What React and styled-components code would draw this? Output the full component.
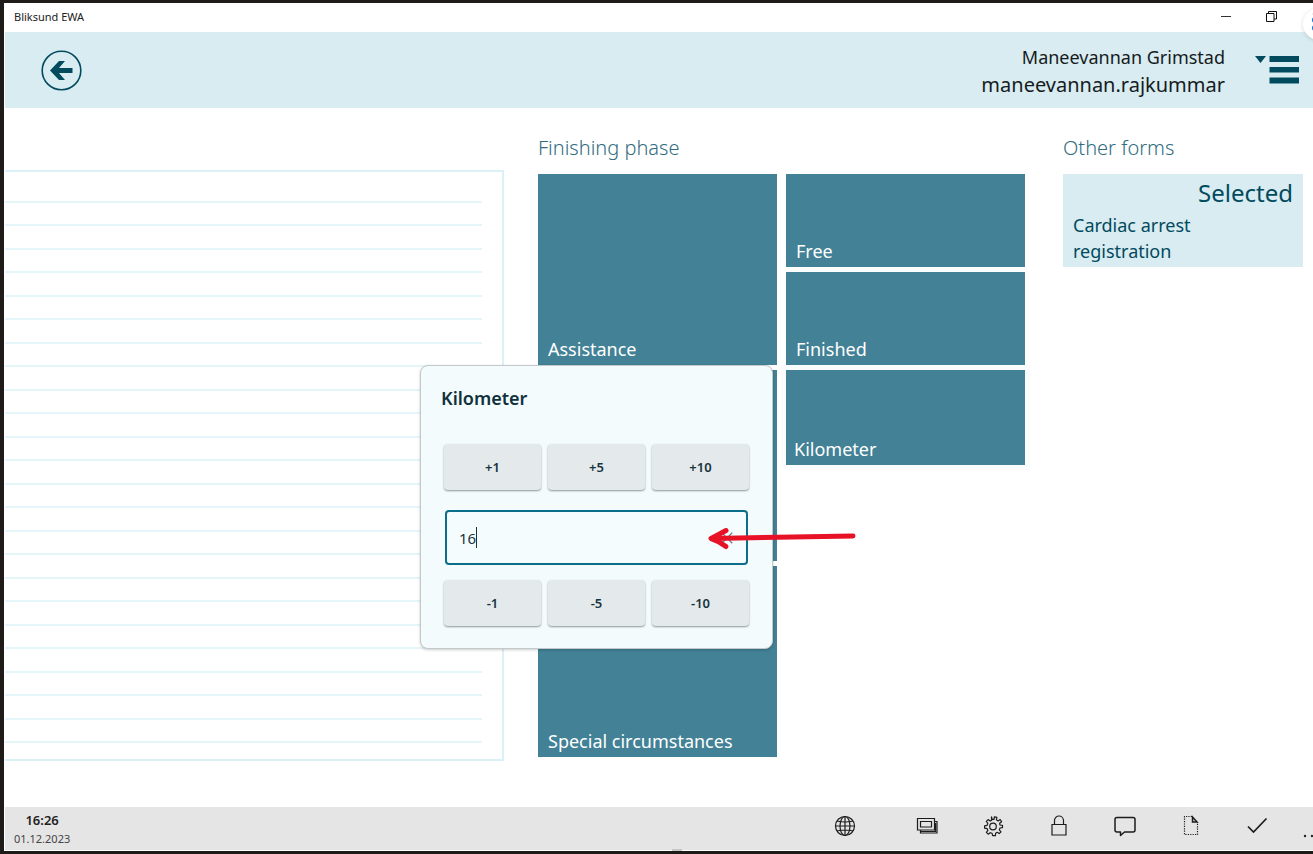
import React, { useState } from 'react'
import styled, { createGlobalStyle } from 'styled-components'

const palette = {
    frame: '#1f1b18',
    pale: '#d8ecf1',
    line: '#daf1f7',
    tile: '#428196',
    dark: '#024a5e',
    heading: '#2f6c80',
    focus: '#0b6f8c'
}

const GlobalStyle = createGlobalStyle`
    * {
        box-sizing: border-box;
    }
    body {
        margin: 0;
        background: ${palette.frame};
        font-family: 'Noto Sans', 'Open Sans', sans-serif;
        overflow-x: hidden;
    }
    button, input {
        font-family: inherit;
    }
`

const Window = styled.div`
    display: flex;
    flex-direction: column;
    min-height: 100vh;
    border: solid ${palette.frame};
    border-width: 3px 0 3px 4px;
    background: #fff;
    position: relative;
    overflow: hidden;
`

const TitleBar = styled.div`
    display: flex;
    align-items: center;
    justify-content: space-between;
    height: 29px;
    padding: 0 36px 2px 10px;
    font-size: 11px;
    color: #222;
`

const WindowControls = styled.div`
    display: flex;
    gap: 34px;
`

const PlainButton = styled.button`
    display: flex;
    padding: 0;
    border: 0;
    background: none;
    color: ${props => props.$color || '#1c1c1c'};
    cursor: pointer;
`

const Header = styled.header`
    display: flex;
    align-items: center;
    height: 76px;
    margin-left: 1px;
    padding: 0 14px 0 35px;
    background: ${palette.pale};
`

const User = styled.div`
    margin-left: auto;
    margin-right: 30px;
    padding-top: 2px;
    text-align: right;
    line-height: 28px;
    color: #161b1d;
`

const FullName = styled.div`
    font-size: 18px;
`

const UserName = styled.div`
    font-size: 20px;
`

const Main = styled.main`
    display: grid;
    grid-template-columns: 499fr 491fr 240fr;
    column-gap: 34px;
    flex: 1;
    padding: 26px 10px 46px 1px;
`

const Notes = styled.section`
    display: flex;
    flex-direction: column;
    margin-top: 36px;
    padding: 7px 20px 16px 0;
    border: solid ${palette.line};
    border-width: 2px 2px 2px 0;
`

const NoteLine = styled.div`
    flex: 1;
    border-bottom: 2px solid #e4f6fa;
`

const Phase = styled.section`
    padding-right: ${props => props.$gap || 0}px;
`

const Heading = styled.h2`
    margin: 0 0 12px;
    font-size: 20px;
    line-height: 28px;
    font-weight: 300;
    color: ${palette.heading};
`

const Tiles = styled.div`
    position: relative;
    display: grid;
    grid-template-columns: 1fr 1fr;
    grid-template-rows: repeat(6, 93px);
    gap: 5px 9px;
`

const Tile = styled.button`
    display: flex;
    align-items: flex-end;
    grid-column: ${props => props.$column};
    grid-row: ${props => props.$row};
    padding: 0 10px 4px;
    border: 0;
    background: ${palette.tile};
    color: #fff;
    font-size: 18px;
    line-height: 24px;
    text-align: left;
    cursor: pointer;
`

const PressedTile = styled(Tile)`
    height: 95px;
    padding: 0 8px 4px;
    box-shadow: 0 0 0 5px #fbfcfe;
`

const FormTile = styled.button`
    display: flex;
    flex-direction: column;
    width: 100%;
    height: 93px;
    padding: 3px 10px;
    border: 0;
    background: ${palette.pale};
    color: ${palette.dark};
    text-align: left;
    font-size: 18px;
    line-height: 26px;
`

const Selected = styled.span`
    align-self: flex-end;
    font-size: 24px;
    line-height: 32px;
`

const FormName = styled.span`
    max-width: 160px;
    padding-top: 3px;
`

const Dialog = styled.div`
    position: absolute;
    top: 191px;
    left: -118px;
    width: 353px;
    padding: 18px 23px 22px;
    border: 1px solid #c3c9ca;
    border-radius: 8px;
    background: #f3fbfd;
    box-shadow: 0 1px 3px rgba(0, 0, 0, .2);
`

const DialogTitle = styled.label`
    display: block;
    margin: 0 -3px 32px;
    font-size: 18px;
    line-height: 28px;
    font-weight: 600;
    color: #10313c;
`

const StepRow = styled.div`
    display: grid;
    grid-template-columns: repeat(3, 1fr);
    gap: 7px;
`

const StepButton = styled.button`
    height: 46px;
    padding: 0;
    border: 0;
    border-radius: 4px;
    background: #e4eaec;
    box-shadow: 0 1px 2px rgba(0, 0, 0, .4);
    color: #17343e;
    font-size: 13px;
    font-weight: 600;
    cursor: pointer;
`

const Field = styled.div`
    display: flex;
    align-items: center;
    height: 55px;
    margin: 20px 1px 15px;
    padding: 0 12px;
    border: 2px solid ${palette.focus};
    border-radius: 4px;
    background: #f5fcfe;
`

const NumberInput = styled.input`
    width: 17px;
    padding: 0;
    border: 0;
    outline: 0;
    background: none;
    color: #1c343c;
    font-size: 15px;
`

const Caret = styled.span`
    width: 1px;
    height: 21px;
    margin-right: auto;
    background: #17343e;
`

const Arrow = styled.svg`
    position: absolute;
    left: 284px;
    top: 156px;
    pointer-events: none;
`

const Footer = styled.footer`
    display: flex;
    align-items: center;
    height: 43px;
    margin: 0 0 1px 1px;
    padding: 0 44px 0 9px;
    background: #e5e5e5;
    position: relative;
`

const Clock = styled.div`
    margin-right: auto;
    padding-top: 2px;
    text-align: center;
    font-size: 11px;
    line-height: 18px;
    color: #444;
`

const Time = styled.div`
    font-size: 13px;
    font-weight: 600;
    line-height: 19px;
    color: #222;
`

const Tools = styled.div`
    display: flex;
    align-items: center;
    gap: 42px;
    padding-bottom: 5px;
`

const FirstTool = styled(PlainButton)`
    margin-right: 16px;
`

const More = styled.svg`
    position: absolute;
    right: 0;
    bottom: 12px;
`

const Handle = styled.div`
    position: absolute;
    left: 51%;
    bottom: -1px;
    width: 10px;
    height: 2px;
    background: #c8c8c8;
`

const Bubble = styled.div`
    position: absolute;
    top: 5px;
    right: -22px;
    width: 32px;
    height: 32px;
    border-radius: 50%;
    background: #fff;
    box-shadow: 0 1px 4px rgba(0, 0, 0, .15);
    overflow: hidden;
`

const Icon = ({ size = 24, width = 1.2, children }) => (
    <svg width={size} height={size} viewBox="0 0 24 24" fill="none" stroke="currentColor" strokeWidth={width} aria-hidden="true">
        {children}
    </svg>
)

const tools = [
    {
        name: 'Displays',
        icon: <><path d="M2.500 4.500h17v11.500h-17z"/><path d="M5.500 7.500h11v5.500h-11z"/><path d="M19.500 7.500h2.500v11.500H5.500v-3M20.500 9v8.500H6"/></>
    },
    {
        name: 'Settings',
        icon: <><path strokeLinejoin="round" d="M10.600 2.800 11 5.300l2 0 .4-2.500 2.500.6-.5 2.400 1.700 1.200 2-1.500 1.500 2.200-2 1.500.4 1.800 2.500.4v2.200l-2.500.4-.7 1.900 1.700 1.900-1.800 1.800-2-1.300-1.600.9-.2 2.400-2.800.1-.5-2.400-1.900-.6-2 1.500-1.800-1.900 1.500-1.900-.8-1.800-2.500-.4v-2.400l2.500-.5.7-1.900-1.500-2 1.800-1.800 2 1.500 1.600-.9-.3-2.400z"/><circle cx="12" cy="12.500" r="3.300"/></>
    },
    {
        name: 'Lock',
        icon: <><path d="M5 10.500h14v10.500H5z"/><path d="M7.500 10.500V6.500a4.500 4.500 0 0 1 9 0v4"/></>
    },
    {
        name: 'Messages',
        icon: <path strokeWidth="1.500" strokeLinejoin="round" d="M4 3.500h16q2 0 2 2v10.500q0 2-2 2h-8.500L7.500 21.500V18H4q-2 0-2-2V5.500q0-2 2-2z"/>
    },
    {
        name: 'New page',
        icon: <><path strokeDasharray="1.200 1.200" d="M13 2.500H5.500v18h13V8"/><path strokeWidth="1.500" d="M13.500 3v5h4.500z"/></>
    },
    {
        name: 'Confirm',
        icon: <path strokeWidth="1.700" d="m3 12.500 5.500 5.500L21.500 4.500"/>
    }
]

const tileList = [
    { name: 'Assistance', column: 1, row: '1 / 3' },
    { name: 'Free', column: 2, row: 1 },
    { name: 'Finished', column: 2, row: 2 },
    { name: '', column: 1, row: '3 / 5' },
    { name: 'Special circumstances', column: 1, row: '5 / 7' }
]

function KilometerDialog() {
    const [value, setValue] = useState(16)
    const step = amount => <StepButton key={amount} onClick={() => setValue(Number(value) + amount)}>
        {amount > 0 ? `+${amount}` : amount}
    </StepButton>

    return <Dialog role="dialog" aria-label="Kilometer">
        <DialogTitle htmlFor="kilometer">Kilometer</DialogTitle>
        <StepRow>{[1, 5, 10].map(step)}</StepRow>
        <Field>
            <NumberInput id="kilometer" value={value} onChange={e => setValue(e.target.value)}/>
            <Caret/>
            <PlainButton aria-label="Clear" $color="#6c7c82" onClick={() => setValue('')}>
                <Icon size={14} width={2}><path d="m3 3 18 18M21 3 3 21"/></Icon>
            </PlainButton>
        </Field>
        <StepRow>{[-1, -5, -10].map(step)}</StepRow>
        <Arrow width="152" height="32" viewBox="0 0 152 32" fill="none" stroke="#e81226" strokeWidth="5" strokeLinecap="round" strokeLinejoin="round">
            <path d="M148 14 L7 16.500"/>
            <path d="M21 8.500 Q13 13 6 16.500 Q14 19 21 24.500"/>
        </Arrow>
    </Dialog>
}

export default function App() {
    return <Window>
        <GlobalStyle/>
        <TitleBar>
            <span>Bliksund EWA</span>
            <WindowControls>
                <PlainButton aria-label="Minimize">
                    <svg width="11" height="11"><path d="M0 5.500h10" stroke="#333"/></svg>
                </PlainButton>
                <PlainButton aria-label="Restore">
                    <svg width="11" height="11" fill="none" stroke="#111"><path d="M.5 2.500h7.500v8h-7.500zM2.500 2.500V.5h8v7.500H8"/></svg>
                </PlainButton>
            </WindowControls>
        </TitleBar>
        <Header>
            <PlainButton aria-label="Back" $color={palette.dark}>
                <svg width="42" height="42" fill="none" stroke="currentColor">
                    <circle cx="21.500" cy="21.500" r="19.300" strokeWidth="1.600"/>
                    <path d="M10 21.500l9-9.500h6l-6 7h13.500v5H19l6 7h-6z" fill="currentColor" stroke="none"/>
                </svg>
            </PlainButton>
            <User>
                <FullName>Maneevannan Grimstad</FullName>
                <UserName>maneevannan.rajkummar</UserName>
            </User>
            <PlainButton aria-label="Menu" $color={palette.dark}>
                <svg width="44" height="28" fill="currentColor">
                    <path d="M0 0h11l-5.500 7zM14.500 0h29.500v6H14.500zM14.500 11h29.500v5.500H14.500zM14.500 21.500h29.500v6H14.500z"/>
                </svg>
            </PlainButton>
        </Header>
        <Main>
            <Notes aria-label="Notes">
                {Array.from({ length: 24 }, (_, i) => <NoteLine key={i}/>)}
            </Notes>
            <Phase $gap={4}>
                <Heading>Finishing phase</Heading>
                <Tiles>
                    {tileList.map(tile => <Tile key={tile.row + tile.name} $column={tile.column} $row={tile.row}>
                        {tile.name}
                    </Tile>)}
                    <PressedTile $column={2} $row={3}>Kilometer</PressedTile>
                    <KilometerDialog/>
                </Tiles>
            </Phase>
            <Phase>
                <Heading>Other forms</Heading>
                <FormTile>
                    <Selected>Selected</Selected>
                    <FormName>Cardiac arrest registration</FormName>
                </FormTile>
            </Phase>
        </Main>
        <Footer>
            <Clock>
                <Time>16:26</Time>
                01.12.2023
            </Clock>
            <Tools>
                <FirstTool aria-label="Language">
                    <Icon><circle cx="12" cy="12" r="9.500"/><path d="M2.500 12h19M12 2.500v19M4 7q8 2 16 0M4 17q8-2 16 0"/><ellipse cx="12" cy="12" rx="5" ry="9.500"/></Icon>
                </FirstTool>
                {tools.map(tool => <PlainButton key={tool.name} aria-label={tool.name}>
                    <Icon>{tool.icon}</Icon>
                </PlainButton>)}
            </Tools>
            <More width="10" height="4" fill="#222"><circle cx="2" cy="2" r="1.200"/><circle cx="9" cy="2" r="1.200"/></More>
            <Handle/>
        </Footer>
        <Bubble>
            <svg width="32" height="32" fill="#0f6fd1"><path d="M9 6l3-1v2z" fill="#777"/><circle cx="12" cy="12" r="3"/><circle cx="12" cy="20" r="3"/></svg>
        </Bubble>
    </Window>
}
